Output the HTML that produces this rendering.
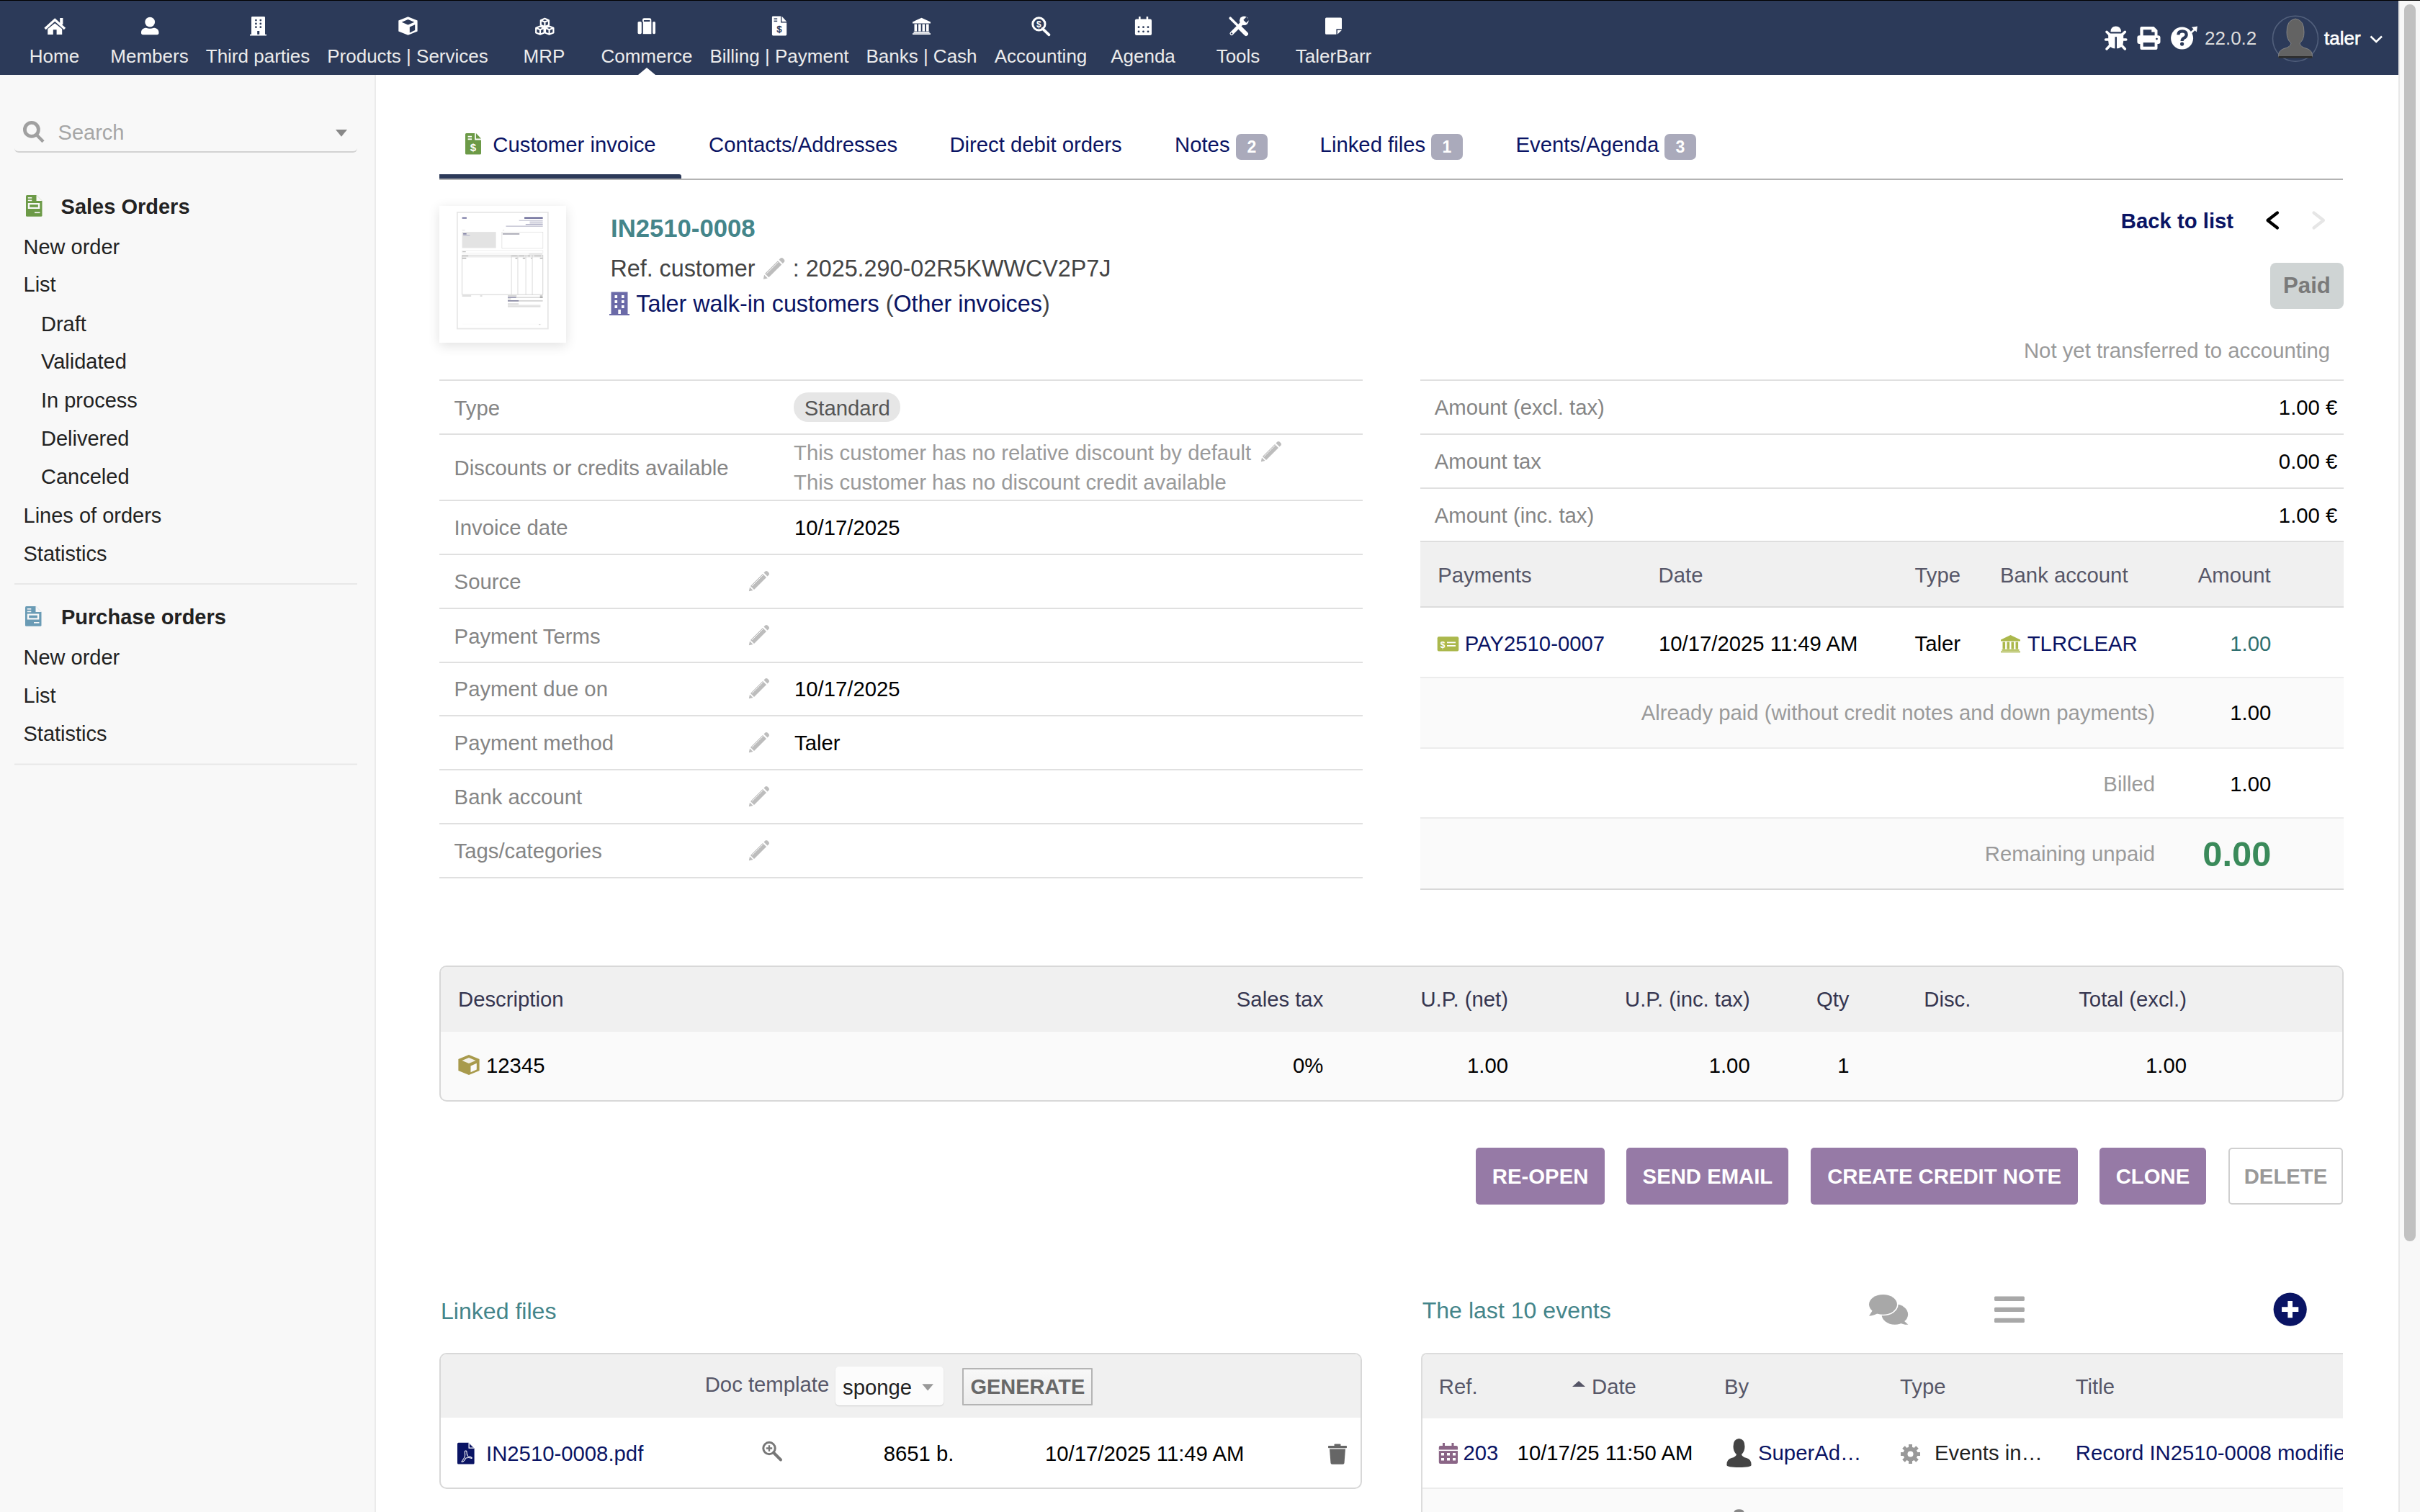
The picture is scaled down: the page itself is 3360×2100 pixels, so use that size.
<!DOCTYPE html>
<html><head><meta charset="utf-8">
<style>
*{box-sizing:border-box;margin:0;padding:0}
html,body{width:3360px;height:2100px;overflow:hidden;background:#fff}
body{font-family:"Liberation Sans",sans-serif;color:#222;position:relative}
.abs{position:absolute}
.t{position:absolute;white-space:nowrap;line-height:1}
#topline{left:0;top:0;width:3360px;height:1px;background:#000;z-index:5}
#nav{left:0;top:1px;width:3330px;height:103px;background:#2c3a59}
.mi{position:absolute;top:0;height:103px;text-align:center;color:#eaeaea;font-size:26px}
.mi .lb{position:absolute;left:0;right:0;top:65px;line-height:26px;white-space:nowrap}
.mi svg{position:absolute;top:24px;left:50%;transform:translateX(-50%)}
#sb{left:0;top:104px;width:522px;height:1996px;background:#f8f8f8;border-right:2px solid #ebebeb}
#scroll{left:3330px;top:1px;width:30px;height:2100px;background:#f8f8f8;border-left:2px solid #e8e8e8}
#thumb{left:3338px;top:6px;width:16px;height:1718px;background:#c1c1c1;border-radius:8px}
.nl{width:400px;text-align:center;font-size:26px;color:#ececec}
.side{font-size:29px;color:#222}
.bold{font-weight:bold}
</style></head>
<body>
<div id="topline" class="abs"></div>
<div id="nav" class="abs"></div>
<div id="navc" class="abs" style="left:0;top:0;width:3330px;height:104px">
<svg class="abs" style="left:0;top:0" width="3330" height="104" viewBox="0 0 3330 104">
<g fill="#fff">
<!-- home -->
<path d="M62.5 40 L76.2 27.6 L90 40" stroke="#fff" stroke-width="3.4" fill="none"/>
<rect x="83.2" y="25" width="4.2" height="9"/>
<path d="M66.2 40.2 L76.2 32.3 L86.2 40.2 V48 H78.6 V41.2 H73.8 V48 H66.2 Z"/>
<!-- members -->
<circle cx="208.2" cy="30.6" r="6.9"/>
<path d="M196 45.5 C196 41 199 38.8 203 38.8 Q208.2 40.6 213.4 38.8 C217.5 38.8 220.5 41 220.5 45.5 Q220.5 48.2 218 48.2 H198.5 Q196 48.2 196 45.5 Z"/>
<!-- building -->
<path d="M349 24.3 Q349 23 350.3 23 H366.7 Q368 23 368 24.3 V47.8 H370 V49.5 H347 V47.8 H349 Z"/>
<g fill="#2c3a59"><circle cx="355.4" cy="28.1" r="1.4"/><circle cx="361.8" cy="28.1" r="1.4"/><circle cx="355.4" cy="32.9" r="1.4"/><circle cx="361.8" cy="32.9" r="1.4"/><circle cx="355.4" cy="37.7" r="1.4"/><circle cx="361.8" cy="37.7" r="1.4"/><rect x="357.2" y="43" width="3" height="4.8"/></g>
<!-- cube -->
<path d="M566.5 23.2 L579.6 28.6 V43.4 L566.5 48.8 L553.3 43.4 V28.6 Z"/>
<path fill="#2c3a59" d="M566.5 27 L575.3 30.8 L566.5 34.6 L557.7 30.8 Z"/>
<path fill="#2c3a59" d="M568.8 37.6 L576.2 34.2 V42 L568.8 45.4 Z"/>
<!-- cubes mrp -->
<g stroke="#fff" stroke-width="2.2" fill="none" stroke-linejoin="round">
<path d="M756.4 25.8 L762 28.2 V34.8 L756.4 37.2 L750.8 34.8 V28.2 Z M750.8 28.2 L756.4 30.6 L762 28.2 M756.4 30.6 V37.2"/>
<path d="M750 36.4 L755.6 38.8 V45.4 L750 47.8 L744.2 45.4 V38.8 Z M744.2 38.8 L750 41.2 L755.6 38.8 M750 41.2 V47.8"/>
<path d="M762.6 36.4 L768.4 38.8 V45.4 L762.6 47.8 L757 45.4 V38.8 Z M757 38.8 L762.6 41.2 L768.4 38.8 M762.6 41.2 V47.8"/>
</g>
<!-- briefcase -->
<path d="M892 30 V27.5 Q892 25.2 894.3 25.2 H901.9 Q904.3 25.2 904.3 27.5 V30 H902.4 V28.1 H893.9 V30 Z"/>
<rect x="885.5" y="30" width="5.3" height="17.2" rx="1.6"/>
<rect x="892.8" y="30" width="11.6" height="17.2"/>
<rect x="906.2" y="30" width="3.8" height="17.2" rx="1.6"/>
<!-- billing file -->
<path d="M1073.3 22.6 H1084 V31.5 H1092.2 V48 Q1092.2 49.4 1090.8 49.4 H1073.3 Q1071.9 49.4 1071.9 48 V24 Q1071.9 22.6 1073.3 22.6 Z"/>
<path d="M1085.4 22.6 L1092.2 30 H1085.4 Z"/>
<g fill="#2c3a59"><rect x="1074.6" y="25.4" width="4.6" height="1.5"/><rect x="1074.6" y="28.6" width="4.6" height="1.5"/></g>
<text x="1082" y="45" font-family="Liberation Sans" font-size="12.5" fill="#2c3a59" stroke="#2c3a59" stroke-width="0.5" text-anchor="middle">$</text>
<!-- bank -->
<path d="M1279.5 24.7 L1292 30.5 V32.5 H1267 V30.5 Z"/>
<rect x="1269.5" y="33.5" width="3.6" height="10"/><rect x="1275.1" y="33.5" width="3.6" height="10"/><rect x="1280.5" y="33.5" width="3.6" height="10"/><rect x="1286" y="33.5" width="3.6" height="10"/>
<rect x="1268.5" y="44" width="22" height="1.8"/><rect x="1267" y="46.2" width="25" height="1.8"/>
<!-- accounting -->
<circle cx="1442.4" cy="33.4" r="8.6" stroke="#fff" stroke-width="3" fill="none"/>
<path d="M1447.5 39.8 L1456.5 48.3" stroke="#fff" stroke-width="3.8" stroke-linecap="round"/>
<text x="1442.4" y="38.3" font-family="Liberation Sans" font-weight="bold" font-size="12" fill="#fff" text-anchor="middle">$</text>
<!-- calendar -->
<rect x="1575.9" y="26.5" width="23.1" height="22.5" rx="2"/>
<rect x="1581" y="23" width="2.6" height="5"/><rect x="1591.6" y="23" width="2.6" height="5"/>

<g fill="#2c3a59"><circle cx="1581" cy="37.7" r="1.4"/><circle cx="1587.5" cy="37.7" r="1.4"/><circle cx="1594" cy="37.7" r="1.4"/><circle cx="1581" cy="43.8" r="1.4"/><circle cx="1587.5" cy="43.8" r="1.4"/><circle cx="1594" cy="43.8" r="1.4"/></g>
<!-- tools -->
<path d="M1708.2 25.2 L1718.5 35.5" stroke="#fff" stroke-width="3.6" stroke-linecap="round"/><path d="M1721 38 L1730 47" stroke="#fff" stroke-width="6" stroke-linecap="round"/><path d="M1710 46.5 L1723.5 33" stroke="#fff" stroke-width="5" stroke-linecap="round"/><circle cx="1727.3" cy="28.7" r="6.3"/><path fill="#2c3a59" d="M1726.3 27.7 L1730.5 23.5 L1734.5 27.5 L1730.3 31.7 Z"/><circle cx="1710" cy="46.5" r="1.2" fill="#2c3a59"/>
<!-- note -->
<path d="M1841.5 24.5 H1861.5 Q1863 24.5 1863 26 V40.2 H1855.4 V47.8 H1841.5 Q1840 47.8 1840 46.3 V26 Q1840 24.5 1841.5 24.5 Z"/>
<path d="M1856.9 47.8 V41.7 H1863 Z"/>
<!-- commerce indicator -->
<path d="M886 104 L898 94 L910 104 Z"/>
</g>
<!-- right side icons -->
<g fill="#fff">
<!-- bug -->
<path d="M2930.4 44.2 Q2930.6 36.6 2937.7 36.6 Q2944.8 36.6 2945 44.2 Z"/>
<path d="M2927.2 46.5 H2948.2 V57 Q2948.2 67.3 2937.7 67.6 Q2927.2 67.3 2927.2 57 Z"/>
<path d="M2923.6 55 H2951.8" stroke="#fff" stroke-width="3.6" stroke-linecap="round"/>
<path d="M2925 44.3 L2929.3 48.6 M2950.4 44.3 L2946.1 48.6 M2925 67.9 L2929.3 63.6 M2950.4 67.9 L2946.1 63.6" stroke="#fff" stroke-width="3.6" stroke-linecap="round"/>
<rect x="2936.5" y="51.2" width="2.5" height="17" fill="#2c3a59"/>
<!-- printer -->
<path d="M2973.4 36.9 H2990.5 L2995.5 41.9 V58 H2971.4 V38.9 Q2971.4 36.9 2973.4 36.9 Z"/>
<path fill="#2c3a59" d="M2975.7 41.2 H2987.3 V44.5 H2991.6 V50.8 H2975.7 Z"/>
<rect x="2967.4" y="49.2" width="32.1" height="11.9" rx="3"/>
<rect x="2971.4" y="57.8" width="24.1" height="11.2" rx="2"/>
<rect x="2975.7" y="59.1" width="15.9" height="5.6" fill="#2c3a59"/>
<circle cx="2994.5" cy="54.1" r="1.4" fill="#2c3a59"/>
<!-- help -->
<circle cx="3029.6" cy="53.1" r="15.5"/>
<path d="M3024.3 48.3 Q3024.5 43.3 3030 43.3 Q3035.7 43.3 3035.7 48 Q3035.7 51.2 3032.2 52.8 Q3029.6 54 3029.6 57" stroke="#2c3a59" stroke-width="4.2" fill="none"/>
<circle cx="3029.6" cy="61.1" r="2.6" fill="#2c3a59"/>
<path d="M3041 46.5 L3048 40" stroke="#fff" stroke-width="2.6"/>
<path d="M3051 36.5 L3042.8 37.8 L3049.8 44.6 Z"/>
</g>
<circle cx="3187" cy="53.7" r="31.5" fill="none" stroke="#52607c" stroke-width="1.6"/>
<g>
<path d="M3163.5 79 Q3163 70 3171 67.5 Q3180 65.5 3181 60 Q3175 55 3175 45 Q3174.5 28 3187 26 Q3199.5 28 3199 45 Q3199 55 3193 60 Q3194 65.5 3203 67.5 Q3211 70 3210.5 79 Z" fill="#636363" stroke="#8e8e8e" stroke-width="0.8"/>
<rect x="3163.5" y="78" width="47" height="2.8" fill="#2e2e2e"/>
</g>
<path d="M3291.5 50.5 L3299.2 58 L3307 50.5" stroke="#fff" stroke-width="2.6" fill="none"/>
</svg>
<div class="t nl" style="left:-124.5px;top:65px">Home</div>
<div class="t nl" style="left:7.5px;top:65px">Members</div>
<div class="t nl" style="left:158px;top:65px">Third parties</div>
<div class="t nl" style="left:366px;top:65px">Products | Services</div>
<div class="t nl" style="left:555.5px;top:65px">MRP</div>
<div class="t nl" style="left:698px;top:65px">Commerce</div>
<div class="t nl" style="left:882px;top:65px">Billing | Payment</div>
<div class="t nl" style="left:1079.5px;top:65px">Banks | Cash</div>
<div class="t nl" style="left:1245px;top:65px">Accounting</div>
<div class="t nl" style="left:1387px;top:65px">Agenda</div>
<div class="t nl" style="left:1519px;top:65px">Tools</div>
<div class="t nl" style="left:1651.5px;top:65px">TalerBarr</div>
<div class="t" style="left:3061px;top:39.5px;font-size:26px;color:#ddd">22.0.2</div>
<div class="t" style="left:3227px;top:39.5px;font-size:26px;color:#fff;-webkit-text-stroke:0.6px #fff">taler</div>
</div>
<div id="scroll" class="abs"></div>
<div id="thumb" class="abs"></div>
<div id="sb" class="abs"></div>
<!--SIDEBAR-->
<svg class="abs" style="left:0;top:104px" width="520" height="1000" viewBox="0 104 520 1000"><circle cx="43.9" cy="179.9" r="9.5" stroke="#a0a0a0" stroke-width="4.8" fill="none"/><path d="M51.5 188 L58.5 195.2" stroke="#a0a0a0" stroke-width="4.4" stroke-linecap="square"/><path d="M466 180 H482 L474 189.8 Z" fill="#888"/><path d="M37.5 271 H50.5 L58.5 279 V299.3 Q58.5 300.8 57 300.8 H37.5 Q36 300.8 36 299.3 V272.5 Q36 271 37.5 271 Z" fill="#6c9a47"/><path d="M50.5 271 V279 H58.5 Z" fill="#f8f8f8"/><g fill="#f8f8f8"><rect x="38.8" y="274" width="5.5" height="1.6"/><rect x="38.8" y="277.6" width="5.5" height="1.6"/><rect x="38.8" y="282" width="16.5" height="8" /></g><rect x="41.2" y="284.2" width="11.7" height="3.6" fill="#6c9a47"/><rect x="48" y="294.5" width="7.5" height="1.6" fill="#f8f8f8"/><path d="M36.5 842 H49.5 L57.5 850 V868.3 Q57.5 869.8 56 869.8 H36.5 Q35 869.8 35 868.3 V843.5 Q35 842 36.5 842 Z" fill="#6a9bb5"/><path d="M49.5 842 V850 H57.5 Z" fill="#f8f8f8"/><g fill="#f8f8f8"><rect x="37.8" y="845" width="5.5" height="1.6"/><rect x="37.8" y="848.6" width="5.5" height="1.6"/><rect x="37.8" y="852.5" width="16.5" height="8" /></g><rect x="40.2" y="854.7" width="11.7" height="3.6" fill="#6a9bb5"/><rect x="47" y="864" width="7.5" height="1.6" fill="#f8f8f8"/><rect x="20" y="810" width="476" height="2" fill="#e8e8e8"/><rect x="20" y="1060.5" width="476" height="2" fill="#e8e8e8"/></svg>
<div class="abs" style="left:20.3px;top:150px;width:475.5px;height:61.6px;border-bottom:2px solid #d2d2d2;border-radius:0 0 6px 6px"></div>
<div class="t" style="left:80.6px;top:169.8px;font-size:29px;color:#a6a6a6;">Search</div>
<div class="t" style="left:84.6px;top:272.5px;font-size:29px;color:#222;font-weight:bold;">Sales Orders</div>
<div class="t" style="left:32.5px;top:328.5px;font-size:29px;color:#222;">New order</div>
<div class="t" style="left:32.5px;top:381.2px;font-size:29px;color:#222;">List</div>
<div class="t" style="left:57px;top:435.5px;font-size:29px;color:#222;">Draft</div>
<div class="t" style="left:57px;top:488.3px;font-size:29px;color:#222;">Validated</div>
<div class="t" style="left:57px;top:542.2px;font-size:29px;color:#222;">In process</div>
<div class="t" style="left:57px;top:595.1px;font-size:29px;color:#222;">Delivered</div>
<div class="t" style="left:57px;top:647.5px;font-size:29px;color:#222;">Canceled</div>
<div class="t" style="left:32.5px;top:701.5px;font-size:29px;color:#222;">Lines of orders</div>
<div class="t" style="left:32.5px;top:754.5px;font-size:29px;color:#222;">Statistics</div>
<div class="t" style="left:85px;top:842.5px;font-size:29px;color:#222;font-weight:bold;">Purchase orders</div>
<div class="t" style="left:32.5px;top:898.5px;font-size:29px;color:#222;">New order</div>
<div class="t" style="left:32.5px;top:951.5px;font-size:29px;color:#222;">List</div>
<div class="t" style="left:32.5px;top:1004.5px;font-size:29px;color:#222;">Statistics</div>
<!--/SIDEBAR-->
<!--MAIN-->
<div class="t" style="left:684.3px;top:186.2px;font-size:29.3px;color:#0a1464;">Customer invoice</div>
<div class="t" style="left:984px;top:186.2px;font-size:29.3px;color:#0a1464;">Contacts/Addresses</div>
<div class="t" style="left:1318.4px;top:186.2px;font-size:29.3px;color:#0a1464;">Direct debit orders</div>
<div class="t" style="left:1631px;top:186.2px;font-size:29.3px;color:#0a1464;">Notes</div>
<div class="t" style="left:1832.6px;top:186.2px;font-size:29.3px;color:#0a1464;">Linked files</div>
<div class="t" style="left:2104.5px;top:186.2px;font-size:29.3px;color:#0a1464;">Events/Agenda</div>
<div class="abs" style="left:1716px;top:186px;width:44px;height:36px;background:#aaaabb;border-radius:7px;color:#fff;font-weight:bold;font-size:23px;line-height:36px;text-align:center">2</div>
<div class="abs" style="left:1987px;top:186px;width:44px;height:36px;background:#aaaabb;border-radius:7px;color:#fff;font-weight:bold;font-size:23px;line-height:36px;text-align:center">1</div>
<div class="abs" style="left:2311px;top:186px;width:44px;height:36px;background:#aaaabb;border-radius:7px;color:#fff;font-weight:bold;font-size:23px;line-height:36px;text-align:center">3</div>
<div class="abs" style="left:610px;top:242px;width:336px;height:6.5px;background:#2c3a59;border-radius:0 3px 0 0"></div>
<div class="abs" style="left:610px;top:248px;width:2643px;height:2px;background:#b3b3b3;"></div>
<svg class="abs" style="left:640px;top:180px" width="40" height="40" viewBox="640 180 40 40"><path d="M647.5 185 H659.1 V194.4 H668 V213 Q668 214.5 666.5 214.5 H647.5 Q646 214.5 646 213 V186.5 Q646 185 647.5 185 Z" fill="#6c9a47"/><path d="M660.9 185 L668 192.6 H660.9 Z" fill="#6c9a47"/><rect x="649.6" y="188.8" width="5.5" height="1.8" fill="#fff"/><rect x="649.6" y="192.4" width="5.5" height="1.8" fill="#fff"/><text x="657" y="209.5" font-family="Liberation Sans" font-weight="bold" font-size="15" fill="#fff" text-anchor="middle">$</text></svg>
<div class="abs" style="left:610px;top:286px;width:176px;height:190px;background:#fff;box-shadow:0 4px 16px rgba(0,0,0,0.12)"></div>
<svg class="abs" style="left:634.3px;top:294.3px" width="128" height="164" viewBox="0 0 128 164"><rect x="0.85" y="0.85" width="126" height="161.7" fill="#fff" stroke="#e6e6e6" stroke-width="1.7"/><rect x="7.64" y="7.87" width="6.25" height="1.82" fill="#6a6a9a" /><rect x="94.06" y="7.87" width="25.59" height="1.82" fill="#4a4a80" /><rect x="86.67" y="11.73" width="32.98" height="0.91" fill="#b4b4c8" /><rect x="101.45" y="13.67" width="18.19" height="0.91" fill="#b4b4c8" /><rect x="101.45" y="15.49" width="18.19" height="0.91" fill="#b4b4c8" /><rect x="95.77" y="17.31" width="23.88" height="0.91" fill="#8a8aaa" /><rect x="68.48" y="19.58" width="51.17" height="1.14" fill="#b4b4c8" /><rect x="7.64" y="25.49" width="3.98" height="0.68" fill="#ccc" /><rect x="63.93" y="25.49" width="2.27" height="0.68" fill="#ccc" /><rect x="7.64" y="28.11" width="46.96" height="22.4" fill="#e3e3e3" /><rect x="9.12" y="30.04" width="4.55" height="1.59" fill="#7a7aa0" /><rect x="9.12" y="32.54" width="9.32" height="1.14" fill="#b8b8cc" /><rect x="62.9" y="28.22" width="56.97" height="22.74" fill="none" stroke="#cfcfcf" stroke-width="0.5"/><rect x="63.93" y="30.27" width="23.31" height="1.36" fill="#8c8c9c" /><rect x="7.75" y="53.92" width="112.12" height="3.64" fill="none" stroke="#dedede" stroke-width="0.5"/><rect x="8.21" y="55.06" width="4.55" height="1.14" fill="#bbb" /><rect x="100.32" y="58.47" width="18.76" height="0.91" fill="#d4d4d4" /><rect x="7.75" y="60.18" width="112.12" height="54.92" fill="none" stroke="#a8a8a8" stroke-width="0.5"/><path d="M7.75 62.79 H119.88 M76.1 60.18 V115.1 M84.97 60.18 V115.1 M96.11 60.18 V115.1 M105.09 60.18 V115.1" stroke="#b0b0b0" stroke-width="0.45"/><rect x="7.98" y="60.97" width="8.19" height="1.14" fill="#c4c4c4" /><rect x="76.66" y="60.97" width="7.16" height="1.14" fill="#c4c4c4" /><rect x="86.67" y="60.97" width="7.39" height="1.14" fill="#c4c4c4" /><rect x="98.61" y="60.97" width="3.41" height="1.14" fill="#c4c4c4" /><rect x="107.71" y="60.97" width="9.67" height="1.14" fill="#c4c4c4" /><rect x="7.98" y="63.93" width="5.34" height="1.36" fill="#aaa" /><rect x="81.55" y="63.93" width="2.84" height="1.36" fill="#aaa" /><rect x="91.79" y="63.93" width="3.41" height="1.36" fill="#aaa" /><rect x="103.16" y="63.93" width="1.48" height="1.36" fill="#aaa" /><rect x="115.67" y="63.93" width="3.75" height="1.36" fill="#aaa" /><rect x="7.64" y="116.46" width="12.51" height="1.14" fill="#c8c8c8" /><rect x="32.66" y="116.46" width="2.84" height="1.14" fill="#c8c8c8" /><rect x="70.98" y="116.24" width="12.28" height="1.48" fill="#cccccc" /><rect x="70.98" y="118.28" width="48.67" height="1.71" fill="#dcdcdc" /><rect x="70.98" y="118.51" width="11.71" height="1.25" fill="#8a8aaa" /><rect x="70.98" y="120.44" width="4.32" height="1.36" fill="#cccccc" /><rect x="70.98" y="122.95" width="48.67" height="1.82" fill="#d6d6d6" /><rect x="70.98" y="123.17" width="15.12" height="1.36" fill="#7a7a9a" /><rect x="115.67" y="116.46" width="3.75" height="1.25" fill="#aaa" /><rect x="115.67" y="118.51" width="3.75" height="1.25" fill="#999" /><rect x="70.98" y="127.61" width="15.12" height="0.91" fill="#bbb" /><rect x="70.98" y="129.65" width="45.49" height="0.91" fill="#d0d0d0" /><rect x="70.98" y="131.47" width="45.49" height="0.91" fill="#c4c4c4" /><rect x="7.64" y="155.92" width="112.01" height="0.23" fill="#eee" /><rect x="113.96" y="156.26" width="2.5" height="0.91" fill="#ccc" /></svg>
<div class="t" style="left:848px;top:300.4px;font-size:34.7px;color:#44858a;font-weight:bold;">IN2510-0008</div>
<div class="t" style="left:847.4px;top:357.0px;font-size:32.3px;color:#444;">Ref. customer</div>
<div class="t" style="left:1100.8px;top:357.0px;font-size:32.3px;color:#444;">: 2025.290-02R5KWWCV2P7J</div>
<div class="t" style="left:883.3px;top:406.4px;font-size:32.3px;color:#0a1464;">Taler walk-in customers <span style="color:#444">(</span>Other invoices<span style="color:#444">)</span></div>
<div class="t" style="left:2944.8px;top:291.8px;font-size:29.3px;color:#0a1464;font-weight:bold;">Back to list</div>
<svg class="abs" style="left:3140px;top:290px" width="100" height="32" viewBox="3140 290 100 32"><path d="M3162 295.5 L3148.5 306 L3162 316.5" stroke="#000" stroke-width="4.2" fill="none" stroke-linecap="round" stroke-linejoin="round"/><path d="M3212.5 295.5 L3226 306 L3212.5 316.5" stroke="#e6e6e6" stroke-width="4.2" fill="none" stroke-linecap="round" stroke-linejoin="round"/></svg>
<div class="abs" style="left:3152px;top:364.5px;width:101.5px;height:64.5px;background:#cfd4d4;border-radius:8px"></div>
<div class="t" style="left:3170px;top:381.3px;font-size:31.2px;color:#7a7a7a;font-weight:bold;">Paid</div>
<div class="t" style="right:125.0px;top:471.8px;font-size:29.3px;color:#9a9a9a;">Not yet transferred to accounting</div>
<svg class="abs" style="left:1059px;top:357px" width="31.5" height="31.5" viewBox="0 0 30 30"><path d="M3 22 L20 5 L25 10 L8 27 Z" fill="#bdbdbd"/><path d="M21.5 3.5 L23.5 1.5 Q25 0.3 26.5 1.5 L28.5 3.5 Q29.7 5 28.5 6.5 L26.5 8.5 Z" fill="#bdbdbd"/><path d="M2 23.5 L6.5 28 L0.8 29.2 Z" fill="#bdbdbd"/><path d="M5 22 L20.5 6.5" stroke="#fff" stroke-width="0.9"/></svg>
<svg class="abs" style="left:846px;top:405px" width="29" height="34" viewBox="846 405 29 34"><path d="M848.5 405.5 H871.5 V436 H874 V438 H846 V436 H848.5 Z" fill="#6b6aa8"/><g fill="#fff"><rect x="853.5" y="410" width="3.6" height="4"/><rect x="863" y="410" width="3.6" height="4"/><rect x="853.5" y="417" width="3.6" height="4"/><rect x="863" y="417" width="3.6" height="4"/><rect x="853.5" y="424" width="3.6" height="4"/><rect x="863" y="424" width="3.6" height="4"/><rect x="858.3" y="430" width="3.6" height="6"/></g></svg>
<div class="abs" style="left:610px;top:526.5px;width:1282px;height:2px;background:#e0e0e0;"></div>
<div class="abs" style="left:610px;top:601.7px;width:1282px;height:2px;background:#e0e0e0;"></div>
<div class="abs" style="left:610px;top:693.6px;width:1282px;height:2px;background:#e0e0e0;"></div>
<div class="abs" style="left:610px;top:768.8px;width:1282px;height:2px;background:#e0e0e0;"></div>
<div class="abs" style="left:610px;top:843.5px;width:1282px;height:2px;background:#e0e0e0;"></div>
<div class="abs" style="left:610px;top:918.8px;width:1282px;height:2px;background:#e0e0e0;"></div>
<div class="abs" style="left:610px;top:992.9px;width:1282px;height:2px;background:#e0e0e0;"></div>
<div class="abs" style="left:610px;top:1067.6px;width:1282px;height:2px;background:#e0e0e0;"></div>
<div class="abs" style="left:610px;top:1142.8px;width:1282px;height:2px;background:#e0e0e0;"></div>
<div class="abs" style="left:610px;top:1218px;width:1282px;height:2px;background:#e0e0e0;"></div>
<div class="t" style="left:630.6px;top:551.6px;font-size:29.3px;color:#858585;">Type</div>
<div class="t" style="left:630.6px;top:634.9px;font-size:29.3px;color:#858585;">Discounts or credits available</div>
<div class="t" style="left:630.6px;top:718.2px;font-size:29.3px;color:#858585;">Invoice date</div>
<div class="t" style="left:630.6px;top:793.2px;font-size:29.3px;color:#858585;">Source</div>
<div class="t" style="left:630.6px;top:868.6px;font-size:29.3px;color:#858585;">Payment Terms</div>
<div class="t" style="left:630.6px;top:942.2px;font-size:29.3px;color:#858585;">Payment due on</div>
<div class="t" style="left:630.6px;top:1017.2px;font-size:29.3px;color:#858585;">Payment method</div>
<div class="t" style="left:630.6px;top:1092.2px;font-size:29.3px;color:#858585;">Bank account</div>
<div class="t" style="left:630.6px;top:1166.8px;font-size:29.3px;color:#858585;">Tags/categories</div>
<div class="abs" style="left:1102px;top:545px;width:148px;height:41px;background:#e6e6e6;border-radius:20px"></div>
<div class="t" style="left:1116.8px;top:551.6px;font-size:29.3px;color:#555;">Standard</div>
<div class="t" style="left:1102px;top:614.2px;font-size:29.3px;color:#9a9a9a;">This customer has no relative discount by default</div>
<svg class="abs" style="left:1750px;top:612px" width="30.0" height="30.0" viewBox="0 0 30 30"><path d="M3 22 L20 5 L25 10 L8 27 Z" fill="#bdbdbd"/><path d="M21.5 3.5 L23.5 1.5 Q25 0.3 26.5 1.5 L28.5 3.5 Q29.7 5 28.5 6.5 L26.5 8.5 Z" fill="#bdbdbd"/><path d="M2 23.5 L6.5 28 L0.8 29.2 Z" fill="#bdbdbd"/><path d="M5 22 L20.5 6.5" stroke="#fff" stroke-width="0.9"/></svg>
<div class="t" style="left:1102px;top:655.2px;font-size:29.3px;color:#9a9a9a;">This customer has no discount credit available</div>
<div class="t" style="left:1103px;top:718.2px;font-size:29.3px;color:#000;">10/17/2025</div>
<svg class="abs" style="left:1039px;top:792px" width="30.0" height="30.0" viewBox="0 0 30 30"><path d="M3 22 L20 5 L25 10 L8 27 Z" fill="#bdbdbd"/><path d="M21.5 3.5 L23.5 1.5 Q25 0.3 26.5 1.5 L28.5 3.5 Q29.7 5 28.5 6.5 L26.5 8.5 Z" fill="#bdbdbd"/><path d="M2 23.5 L6.5 28 L0.8 29.2 Z" fill="#bdbdbd"/><path d="M5 22 L20.5 6.5" stroke="#fff" stroke-width="0.9"/></svg>
<svg class="abs" style="left:1039px;top:867.4px" width="30.0" height="30.0" viewBox="0 0 30 30"><path d="M3 22 L20 5 L25 10 L8 27 Z" fill="#bdbdbd"/><path d="M21.5 3.5 L23.5 1.5 Q25 0.3 26.5 1.5 L28.5 3.5 Q29.7 5 28.5 6.5 L26.5 8.5 Z" fill="#bdbdbd"/><path d="M2 23.5 L6.5 28 L0.8 29.2 Z" fill="#bdbdbd"/><path d="M5 22 L20.5 6.5" stroke="#fff" stroke-width="0.9"/></svg>
<svg class="abs" style="left:1039px;top:941px" width="30.0" height="30.0" viewBox="0 0 30 30"><path d="M3 22 L20 5 L25 10 L8 27 Z" fill="#bdbdbd"/><path d="M21.5 3.5 L23.5 1.5 Q25 0.3 26.5 1.5 L28.5 3.5 Q29.7 5 28.5 6.5 L26.5 8.5 Z" fill="#bdbdbd"/><path d="M2 23.5 L6.5 28 L0.8 29.2 Z" fill="#bdbdbd"/><path d="M5 22 L20.5 6.5" stroke="#fff" stroke-width="0.9"/></svg>
<svg class="abs" style="left:1039px;top:1016px" width="30.0" height="30.0" viewBox="0 0 30 30"><path d="M3 22 L20 5 L25 10 L8 27 Z" fill="#bdbdbd"/><path d="M21.5 3.5 L23.5 1.5 Q25 0.3 26.5 1.5 L28.5 3.5 Q29.7 5 28.5 6.5 L26.5 8.5 Z" fill="#bdbdbd"/><path d="M2 23.5 L6.5 28 L0.8 29.2 Z" fill="#bdbdbd"/><path d="M5 22 L20.5 6.5" stroke="#fff" stroke-width="0.9"/></svg>
<svg class="abs" style="left:1039px;top:1091px" width="30.0" height="30.0" viewBox="0 0 30 30"><path d="M3 22 L20 5 L25 10 L8 27 Z" fill="#bdbdbd"/><path d="M21.5 3.5 L23.5 1.5 Q25 0.3 26.5 1.5 L28.5 3.5 Q29.7 5 28.5 6.5 L26.5 8.5 Z" fill="#bdbdbd"/><path d="M2 23.5 L6.5 28 L0.8 29.2 Z" fill="#bdbdbd"/><path d="M5 22 L20.5 6.5" stroke="#fff" stroke-width="0.9"/></svg>
<svg class="abs" style="left:1039px;top:1165.6px" width="30.0" height="30.0" viewBox="0 0 30 30"><path d="M3 22 L20 5 L25 10 L8 27 Z" fill="#bdbdbd"/><path d="M21.5 3.5 L23.5 1.5 Q25 0.3 26.5 1.5 L28.5 3.5 Q29.7 5 28.5 6.5 L26.5 8.5 Z" fill="#bdbdbd"/><path d="M2 23.5 L6.5 28 L0.8 29.2 Z" fill="#bdbdbd"/><path d="M5 22 L20.5 6.5" stroke="#fff" stroke-width="0.9"/></svg>
<div class="t" style="left:1103px;top:942.2px;font-size:29.3px;color:#000;">10/17/2025</div>
<div class="t" style="left:1103px;top:1017.2px;font-size:29.3px;color:#000;">Taler</div>
<div class="abs" style="left:1972px;top:526.8px;width:1282px;height:2px;background:#e0e0e0;"></div>
<div class="abs" style="left:1972px;top:601.6px;width:1282px;height:2px;background:#e0e0e0;"></div>
<div class="abs" style="left:1972px;top:676.9px;width:1282px;height:2px;background:#e0e0e0;"></div>
<div class="t" style="left:1991.8px;top:551.0px;font-size:29.3px;color:#858585;">Amount (excl. tax)</div>
<div class="t" style="left:1991.8px;top:626.2px;font-size:29.3px;color:#858585;">Amount tax</div>
<div class="t" style="left:1991.8px;top:700.5px;font-size:29.3px;color:#858585;">Amount (inc. tax)</div>
<div class="t" style="right:114.7px;top:551.0px;font-size:29.3px;color:#000;">1.00 €</div>
<div class="t" style="right:114.7px;top:626.2px;font-size:29.3px;color:#000;">0.00 €</div>
<div class="t" style="right:114.7px;top:700.5px;font-size:29.3px;color:#000;">1.00 €</div>
<div class="abs" style="left:1972px;top:750.5px;width:1282px;height:93.5px;background:#f0f0f0;border-top:2px solid #dedede;border-bottom:2px solid #dcdcdc"></div>
<div class="t" style="left:1996.3px;top:783.6px;font-size:29.3px;color:#575768;">Payments</div>
<div class="t" style="left:2302.6px;top:783.6px;font-size:29.3px;color:#575768;">Date</div>
<div class="t" style="left:2658.5px;top:783.6px;font-size:29.3px;color:#575768;">Type</div>
<div class="t" style="left:2777px;top:783.6px;font-size:29.3px;color:#575768;">Bank account</div>
<div class="t" style="left:3051.8px;top:783.6px;font-size:29.3px;color:#575768;">Amount</div>
<div class="t" style="left:2033.7px;top:878.7px;font-size:29.3px;color:#0a1464;">PAY2510-0007</div>
<div class="t" style="left:2303px;top:878.7px;font-size:29.3px;color:#000;">10/17/2025 11:49 AM</div>
<div class="t" style="left:2658.5px;top:878.7px;font-size:29.3px;color:#000;">Taler</div>
<div class="t" style="left:2814.7px;top:878.7px;font-size:29.3px;color:#0a1464;">TLRCLEAR</div>
<div class="t" style="right:206.7px;top:878.7px;font-size:29.3px;color:#2f6f6f;">1.00</div>
<div class="abs" style="left:1972px;top:940px;width:1282px;height:2px;background:#ececec;"></div>
<div class="abs" style="left:1972px;top:942px;width:1282px;height:96px;background:#fafafa;"></div>
<div class="abs" style="left:1972px;top:1037.5px;width:1282px;height:2px;background:#ececec;"></div>
<div class="abs" style="left:1972px;top:1135px;width:1282px;height:2px;background:#ececec;"></div>
<div class="abs" style="left:1972px;top:1137px;width:1282px;height:97px;background:#fafafa;"></div>
<div class="abs" style="left:1972px;top:1234px;width:1282px;height:2px;background:#d8d8d8;"></div>
<div class="t" style="right:368.0px;top:974.7px;font-size:29.3px;color:#9a9a9a;">Already paid (without credit notes and down payments)</div>
<div class="t" style="right:206.7px;top:974.7px;font-size:29.3px;color:#000;">1.00</div>
<div class="t" style="right:368.0px;top:1074.0px;font-size:29.3px;color:#9a9a9a;">Billed</div>
<div class="t" style="right:206.7px;top:1074.0px;font-size:29.3px;color:#000;">1.00</div>
<div class="t" style="right:368.0px;top:1171.2px;font-size:29.3px;color:#9a9a9a;">Remaining unpaid</div>
<div class="t" style="right:206.7px;top:1161.7px;font-size:48.8px;color:#3a8a5a;font-weight:bold;">0.00</div>
<svg class="abs" style="left:1990px;top:875px" width="830" height="40" viewBox="1990 875 830 40"><rect x="1995.7" y="884.3" width="29.6" height="20.2" rx="2" fill="#abb84c"/><text x="2003" y="900" font-family="Liberation Sans" font-weight="bold" font-size="12" fill="#fff" text-anchor="middle">$</text><rect x="2009" y="891.5" width="12" height="1.8" fill="#fff"/><rect x="2009" y="896" width="12" height="1.8" fill="#fff"/><path d="M2791.5 882 L2805 888.5 V890.5 H2778 V888.5 Z" fill="#abb84c"/><rect x="2780.5" y="891.5" width="3.6" height="10" fill="#abb84c"/><rect x="2786.5" y="891.5" width="3.6" height="10" fill="#abb84c"/><rect x="2792.5" y="891.5" width="3.6" height="10" fill="#abb84c"/><rect x="2798.5" y="891.5" width="3.6" height="10" fill="#abb84c"/><rect x="2779.5" y="902" width="24" height="1.8" fill="#abb84c"/><rect x="2778" y="904.5" width="27" height="1.8" fill="#abb84c"/></svg>
<div class="abs" style="left:610px;top:1340.5px;width:2643.5px;height:189.5px;border:2px solid #d8d8d8;border-radius:10px;overflow:hidden;background:#fafafa"><div style="height:90px;background:#f0f0f0"></div></div>
<div class="t" style="left:636px;top:1373.2px;font-size:29.3px;color:#363650;">Description</div>
<div class="t" style="right:1522.7px;top:1373.2px;font-size:29.3px;color:#363650;">Sales tax</div>
<div class="t" style="right:1266.0px;top:1373.2px;font-size:29.3px;color:#363650;">U.P. (net)</div>
<div class="t" style="right:930.3px;top:1373.2px;font-size:29.3px;color:#363650;">U.P. (inc. tax)</div>
<div class="t" style="right:792.5px;top:1373.2px;font-size:29.3px;color:#363650;">Qty</div>
<div class="t" style="left:2671.3px;top:1373.2px;font-size:29.3px;color:#363650;">Disc.</div>
<div class="t" style="right:324.0px;top:1373.2px;font-size:29.3px;color:#363650;">Total (excl.)</div>
<div class="t" style="left:675px;top:1465.2px;font-size:29.3px;color:#000;">12345</div>
<div class="t" style="right:1522.7px;top:1465.2px;font-size:29.3px;color:#000;">0%</div>
<div class="t" style="right:1266.0px;top:1465.2px;font-size:29.3px;color:#000;">1.00</div>
<div class="t" style="right:930.3px;top:1465.2px;font-size:29.3px;color:#000;">1.00</div>
<div class="t" style="right:792.5px;top:1465.2px;font-size:29.3px;color:#000;">1</div>
<div class="t" style="right:324.0px;top:1465.2px;font-size:29.3px;color:#000;">1.00</div>
<svg class="abs" style="left:634px;top:1463px" width="34" height="34" viewBox="634 1463 34 34"><path d="M651 1465 L665.6 1471 V1487 L651 1493 L636.4 1487 V1471 Z" fill="#a89a4c"/><path d="M651 1469 L660.5 1473 L651 1477 L641.5 1473 Z" fill="#fafafa" opacity="0.9"/><path d="M653.5 1480.5 L661.8 1476.8 V1485.5 L653.5 1489.2 Z" fill="#fafafa"/></svg>
<div class="abs" style="left:2049.4px;top:1594px;width:178.4px;height:79px;background:#967aa6;border-radius:5px;color:#fff;font-weight:bold;font-size:29.3px;line-height:79px;text-align:center;white-space:nowrap">RE-OPEN</div>
<div class="abs" style="left:2258.4px;top:1594px;width:225.1px;height:79px;background:#967aa6;border-radius:5px;color:#fff;font-weight:bold;font-size:29.3px;line-height:79px;text-align:center;white-space:nowrap">SEND EMAIL</div>
<div class="abs" style="left:2514px;top:1594px;width:371.3px;height:79px;background:#967aa6;border-radius:5px;color:#fff;font-weight:bold;font-size:29.3px;line-height:79px;text-align:center;white-space:nowrap">CREATE CREDIT NOTE</div>
<div class="abs" style="left:2915.4px;top:1594px;width:147.2px;height:79px;background:#967aa6;border-radius:5px;color:#fff;font-weight:bold;font-size:29.3px;line-height:79px;text-align:center;white-space:nowrap">CLONE</div>
<div class="abs" style="left:3093.7px;top:1594px;width:159.6px;height:79px;background:#fff;border:2px solid #d0d0d0;border-radius:5px;color:#999;font-weight:bold;font-size:29.3px;line-height:75px;text-align:center">DELETE</div>
<div class="t" style="left:612px;top:1804.8px;font-size:32.1px;color:#44858a;">Linked files</div>
<div class="abs" style="left:610.3px;top:1878.6px;width:1280.5px;height:189px;border:2px solid #d8d8d8;border-radius:10px;overflow:hidden;background:#fff"><div style="height:88px;background:#f0f0f0"></div></div>
<div class="t" style="left:978.7px;top:1908.2px;font-size:29.3px;color:#575768;">Doc template</div>
<div class="abs" style="left:1160.2px;top:1898px;width:149.7px;height:54px;background:#fcfcfc;border-radius:5px;box-shadow:0 1px 1.5px rgba(0,0,0,0.15)"></div>
<div class="t" style="left:1170px;top:1911.5px;font-size:29.3px;color:#222;">sponge</div>
<svg class="abs" style="left:1278px;top:1920px" width="20" height="14" viewBox="0 0 20 14"><path d="M2.3 2.2 H18 L10.15 11.6 Z" fill="#999"/></svg>
<div class="abs" style="left:1336.4px;top:1899.6px;width:181px;height:52px;background:linear-gradient(#f8f8f8,#ececec);border:2px solid #b4b4b4;border-radius:1px;color:#686868;font-weight:bold;font-size:29px;line-height:48px;text-align:center">GENERATE</div>
<div class="t" style="left:675px;top:2004.2px;font-size:29.3px;color:#0a1464;">IN2510-0008.pdf</div>
<div class="t" style="left:1226.7px;top:2004.2px;font-size:29.3px;color:#000;">8651 b.</div>
<div class="t" style="left:1451px;top:2004.2px;font-size:29.3px;color:#000;">10/17/2025 11:49 AM</div>
<svg class="abs" style="left:630px;top:1995px" width="1250" height="45" viewBox="630 1995 1250 45"><path d="M636.5 2003.7 H650.5 L658.6 2011.8 V2032 Q658.6 2033.6 657 2033.6 H636.5 Q635 2033.6 635 2032 V2005.3 Q635 2003.7 636.5 2003.7 Z" fill="#0a1464"/><path d="M650.5 2003.7 V2011.8 H658.6 Z" fill="#fff"/><path d="M651.8 2005.3 V2010.5 H657 Z" fill="#0a1464"/><path d="M646.5 2015 Q644.8 2015 645.5 2019 Q646.5 2023 642 2028.5 Q640 2030.8 641.8 2030.5 Q644 2030 647 2025 Q651 2024 654 2025.2 Q655.8 2025.8 655 2024.3 Q653.5 2023 649.5 2022.5 Q647.8 2019.5 648 2016 Q647.8 2015 646.5 2015 Z" fill="none" stroke="#fff" stroke-width="1.1"/><circle cx="1068" cy="2011.5" r="8.2" fill="none" stroke="#777" stroke-width="3"/><path d="M1074 2017.5 L1084 2027.5" stroke="#777" stroke-width="4" stroke-linecap="round"/><path d="M1068 2007.3 V2015.7 M1063.8 2011.5 H1072.2" stroke="#777" stroke-width="2.4"/><rect x="1844" y="2008" width="26" height="3.2" rx="1" fill="#666"/><rect x="1852.5" y="2005.5" width="9" height="3" rx="1" fill="#666"/><path d="M1846 2012.5 H1868 L1866.5 2032 Q1866.3 2033.8 1864.5 2033.8 H1849.5 Q1847.7 2033.8 1847.5 2032 Z" fill="#666"/></svg>
<div class="t" style="left:1974.7px;top:1803.5px;font-size:32.1px;color:#44858a;">The last 10 events</div>
<svg class="abs" style="left:2580px;top:1785px" width="640" height="65" viewBox="2580 1785 640 65"><ellipse cx="2630.8" cy="1825.5" rx="18.3" ry="14.3" fill="#a8a8a8"/><path d="M2643 1834 L2649.3 1839.8 Q2642 1840 2637.5 1837 Z" fill="#a8a8a8"/><ellipse cx="2614.5" cy="1811.8" rx="19.5" ry="13.9" fill="#a8a8a8" stroke="#fff" stroke-width="3.2"/><ellipse cx="2614.5" cy="1811.8" rx="19.5" ry="13.9" fill="#a8a8a8"/><path d="M2601.5 1817.5 L2595 1827.7 Q2602.5 1827.6 2609 1822.5 Z" fill="#a8a8a8"/><rect x="2769" y="1800.6" width="41.9" height="6.3" rx="1.6" fill="#a8a8a8"/><rect x="2769" y="1815.8" width="41.9" height="6.3" rx="1.6" fill="#a8a8a8"/><rect x="2769" y="1830.8" width="41.9" height="6.3" rx="1.6" fill="#a8a8a8"/><circle cx="3179.7" cy="1818.6" r="23.1" fill="#0a1464"/><path d="M3179.7 1807 V1830.2 M3168.1 1818.6 H3191.3" stroke="#fff" stroke-width="6.6"/></svg>
<div class="abs" style="left:1973px;top:1879.3px;width:1280px;height:260px;border:2px solid #dcdcdc;border-right:none;border-radius:8px 0 0 8px;overflow:hidden;background:#fff"><div style="height:89px;background:#f0f0f0"></div><div style="height:98px;background:#fff;border-bottom:2px solid #ececec"></div><div style="height:100px;background:#fafafa"></div></div>
<div class="t" style="left:1997.8px;top:1911.2px;font-size:29.3px;color:#575768;">Ref.</div>
<div class="t" style="left:2210px;top:1911.2px;font-size:29.3px;color:#575768;">Date</div>
<div class="t" style="left:2394px;top:1911.2px;font-size:29.3px;color:#575768;">By</div>
<div class="t" style="left:2638px;top:1911.2px;font-size:29.3px;color:#575768;">Type</div>
<div class="t" style="left:2881.8px;top:1911.2px;font-size:29.3px;color:#575768;">Title</div>
<svg class="abs" style="left:2180px;top:1915px" width="24" height="14" viewBox="0 0 24 14"><path d="M3 11 H21 L12 3 Z" fill="#555566"/></svg>
<div class="t" style="left:2031.4px;top:2002.6px;font-size:29.3px;color:#0a1464;">203</div>
<div class="t" style="left:2106.6px;top:2002.6px;font-size:29.3px;color:#000;">10/17/25 11:50 AM</div>
<div class="t" style="left:2441px;top:2002.6px;font-size:29.3px;color:#0a1464;">SuperAd…</div>
<div class="t" style="left:2686px;top:2002.6px;font-size:29.3px;color:#222;">Events in…</div>
<div class="abs" style="left:2881.8px;top:1990px;width:371px;height:50px;overflow:hidden"><div class="t" style="left:0px;top:12.6px;font-size:29.3px;color:#0a1464;">Record IN2510-0008 modified</div></div>
<svg class="abs" style="left:1990px;top:1995px" width="700" height="105" viewBox="1990 1995 700 105"><rect x="1997.8" y="2008" width="26.2" height="25" rx="2" fill="#8a6586"/><rect x="2003" y="2004" width="3" height="6" fill="#8a6586"/><rect x="2015.5" y="2004" width="3" height="6" fill="#8a6586"/><rect x="1997.8" y="2013.5" width="26.2" height="1.6" fill="#fff"/><g fill="#fff"><rect x="2001" y="2018" width="4" height="3.5"/><rect x="2009" y="2018" width="4" height="3.5"/><rect x="2017" y="2018" width="4" height="3.5"/><rect x="2001" y="2025" width="4" height="3.5"/><rect x="2009" y="2025" width="4" height="3.5"/><rect x="2017" y="2025" width="4" height="3.5"/></g><path d="M2397.5 2035 Q2397 2027 2404 2025 Q2410 2023.5 2411 2020 Q2406.5 2016 2406.5 2009 Q2406.5 1998.5 2414.5 1998 Q2422.5 1998.5 2422.5 2009 Q2422.5 2016 2418 2020 Q2419 2023.5 2425 2025 Q2432 2027 2431.5 2035 Q2431 2038 2414.5 2038 Q2398 2038 2397.5 2035 Z" fill="#444"/><circle cx="2652.5" cy="2019.5" r="10" fill="#999"/><g stroke="#999" stroke-width="5"><path d="M2652.5 2006 V2033 M2639 2019.5 H2666 M2643 2010 L2662 2029 M2643 2029 L2662 2010"/></g><circle cx="2652.5" cy="2019.5" r="4" fill="#fff"/><path d="M2407.5 2100 Q2408 2096.5 2414.5 2096.2 Q2421 2096.5 2421.5 2100 Z" fill="#888"/></svg>
<!--/MAIN-->
</body></html>
